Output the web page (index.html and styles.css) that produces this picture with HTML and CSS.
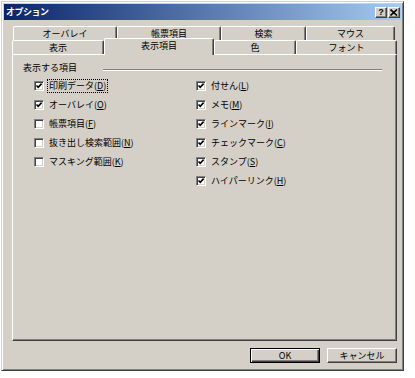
FILE: index.html
```html
<!DOCTYPE html>
<html lang="ja">
<head>
  <meta charset="UTF-8" />
  <title>オプション</title>
  <link rel="stylesheet" href="styles.css">
</head>
<body>
  <div class="dialog">
    <div class="titlebar">
      <span class="title">オプション</span>
      <div class="caption-buttons">
        <span class="cap-btn help">?</span>
        <span class="cap-btn close">
          <svg width="8" height="7" viewBox="0 0 8 7"><path d="M0.5 0.5L7 6.5M7 0.5L0.5 6.5" stroke="#000" stroke-width="1.6"/></svg>
        </span>
      </div>
    </div>

    <div class="tabs">
      <div class="tab-row back">
        <div class="tab t-overlay">オーバレイ</div>
        <div class="tab t-form">帳票項目</div>
        <div class="tab t-search">検索</div>
        <div class="tab t-mouse">マウス</div>
      </div>
      <div class="tab-row front">
        <div class="tab t-view">表示</div>
        <div class="tab t-items active">表示項目</div>
        <div class="tab t-color">色</div>
        <div class="tab t-font">フォント</div>
      </div>
    </div>

    <div class="panel">
      <div class="group-head">
        <span class="group-label">表示する項目</span>
        <span class="etch"></span>
      </div>
      <div class="columns">
        <ul class="checks">
          <li><span class="box checked"></span><span class="label focus">印刷データ(<u>D</u>)</span></li>
          <li><span class="box checked"></span><span class="label">オーバレイ(<u>O</u>)</span></li>
          <li><span class="box"></span><span class="label">帳票項目(<u>F</u>)</span></li>
          <li><span class="box"></span><span class="label">抜き出し検索範囲(<u>N</u>)</span></li>
          <li><span class="box"></span><span class="label">マスキング範囲(<u>K</u>)</span></li>
        </ul>
        <ul class="checks">
          <li><span class="box checked"></span><span class="label">付せん(<u>L</u>)</span></li>
          <li><span class="box checked"></span><span class="label">メモ(<u>M</u>)</span></li>
          <li><span class="box checked"></span><span class="label">ラインマーク(<u>I</u>)</span></li>
          <li><span class="box checked"></span><span class="label">チェックマーク(<u>C</u>)</span></li>
          <li><span class="box checked"></span><span class="label">スタンプ(<u>S</u>)</span></li>
          <li><span class="box checked"></span><span class="label">ハイパーリンク(<u>H</u>)</span></li>
        </ul>
      </div>
    </div>

    <div class="buttons">
      <button class="btn default">OK</button>
      <button class="btn">キャンセル</button>
    </div>
  </div>
</body>
</html>
```

FILE: styles.css
```css
* { margin: 0; padding: 0; box-sizing: border-box; }

body {
  background: #fff;
  font-family: "Noto Sans CJK JP", "Noto Sans", sans-serif;
  font-size: 9px;
  color: #000;
}

.dialog {
  margin: 1px 0 0 1px;
  width: 403px;
  height: 370px;
  padding: 2px;
  background: #d4d0c8;
  border: 1px solid;
  border-color: #d4d0c8 #404040 #404040 #d4d0c8;
  box-shadow: inset 1px 1px #fff, inset -1px -1px #808080;
  display: flex;
  flex-direction: column;
}

/* タイトルバー */
.titlebar {
  height: 16px;
  display: flex;
  align-items: center;
  justify-content: space-between;
  padding: 0 1px 0 2px;
  background: linear-gradient(to right, #0a246a, #a6caf0);
}

.title {
  color: #fff;
  font-weight: bold;
  font-size: 9px;
  line-height: 16px;
  letter-spacing: -0.5px;
}

.caption-buttons {
  display: flex;
  gap: 1px;
}

.cap-btn {
  width: 12px;
  height: 11px;
  display: flex;
  align-items: center;
  justify-content: center;
  background: #d4d0c8;
  border: 1px solid;
  border-color: #fff #404040 #404040 #fff;
  box-shadow: inset -1px -1px #808080;
  font-weight: bold;
  font-size: 9px;
  line-height: 9px;
  font-family: "Liberation Sans", sans-serif;
}

/* タブ */
.tabs {
  margin-top: 6px;
  padding-left: 8px;
}

.tab-row {
  display: flex;
  align-items: flex-end;
  height: 14px;
}

.tab-row.back {
  padding-left: 1px;
}

.tab {
  height: 14px;
  display: flex;
  align-items: center;
  justify-content: center;
  background: #d4d0c8;
  border-top: 1px solid #fff;
  border-left: 1px solid #fff;
  border-right: 1px solid #404040;
  box-shadow: inset -1px 0 #808080;
  border-radius: 2px 2px 0 0;
  line-height: 12px;
}

.t-overlay { width: 104px; }
.t-form { width: 104px; }
.t-search { width: 85px; }
.t-mouse { width: 89px; }

.t-view { width: 92px; }
.t-items { width: 110px; }
.t-color { width: 82px; }
.t-font { width: 101px; }

.tab.active {
  height: 17px;
  margin-bottom: -1px;
  position: relative;
  z-index: 1;
  padding-bottom: 3px;
}

/* パネル */
.panel {
  width: 385px;
  height: 287px;
  margin-left: 8px;
  padding: 7px 14px 0 10px;
  border: 1px solid;
  border-color: #fff #404040 #404040 #fff;
  box-shadow: inset -1px -1px #808080;
}

.group-head {
  display: flex;
  align-items: center;
  height: 12px;
}

.group-label {
  line-height: 12px;
}

.etch {
  flex: 1;
  margin-left: 26px;
  margin-top: 3px;
  height: 2px;
  border-top: 1px solid #808080;
  border-bottom: 1px solid #fff;
}

.columns {
  display: grid;
  grid-template-columns: 162px 1fr;
  padding-left: 11px;
  margin-top: 2px;
}

.checks {
  list-style: none;
}

.checks li {
  height: 19px;
  display: flex;
  align-items: center;
  gap: 3px;
}

.box {
  width: 10px;
  height: 10px;
  background: #fff;
  border: 1px solid;
  border-color: #808080 #fff #fff #808080;
  box-shadow: inset 1px 1px #404040, inset -1px -1px #d4d0c8;
  flex-shrink: 0;
}

.box.checked {
  background: #fff url("data:image/svg+xml,%3Csvg xmlns='http://www.w3.org/2000/svg' width='8' height='8' viewBox='0 0 8 8'%3E%3Cpath d='M1.5 3.5L3.2 5.3L6.6 1.6' fill='none' stroke='%23000' stroke-width='1.6'/%3E%3C/svg%3E") center / 8px 8px no-repeat;
}

.label {
  line-height: 12px;
  padding: 0 1px;
  border: 1px dotted transparent;
}

.label.focus {
  border-color: #000;
}

.label u {
  text-underline-offset: 1px;
}

/* ボタン */
.buttons {
  display: flex;
  justify-content: flex-end;
  gap: 7px;
  margin-top: 7px;
  padding-right: 4px;
}

.btn {
  width: 70px;
  height: 15px;
  font-family: inherit;
  font-size: 9px;
  line-height: 11px;
  background: #d4d0c8;
  border: 1px solid;
  border-color: #fff #404040 #404040 #fff;
  box-shadow: inset -1px -1px #808080;
  color: #000;
}

.btn.default {
  border: 1px solid #000;
  box-shadow: inset 1px 1px #fff, inset -1px -1px #404040, inset -2px -2px #808080;
}
```
